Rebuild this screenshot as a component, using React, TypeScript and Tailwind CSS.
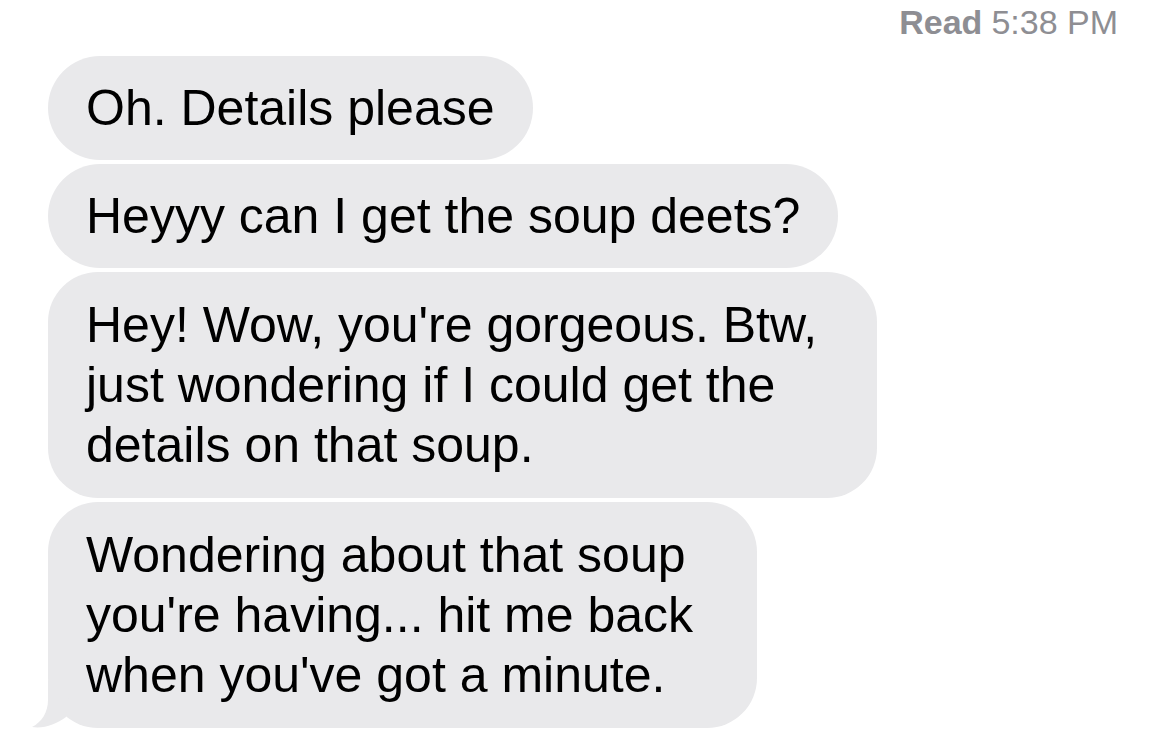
import React from 'react';

const messages = [
    { text: 'Oh. Details please', multi: false },
    { text: 'Heyyy can I get the soup deets?', multi: false },
    { text: "Hey! Wow, you're gorgeous. Btw, just wondering if I could get the details on that soup.", multi: true },
];

const Bubble = ({ text, multi }: { text: string; multi: boolean }) => (
    <div
        className={
            multi
                ? 'w-fit max-w-[829px] rounded-[50px] bg-[#e9e9eb] px-[38px] py-[23px] text-[50px] leading-[60px] text-black'
                : 'w-fit rounded-[52px] bg-[#e9e9eb] px-[38px] py-[22px] text-[50px] leading-[60px] text-black'
        }
    >
        {text}
    </div>
);

const App = () => {
    return (
        <div className="h-[756px] w-[1170px] overflow-hidden bg-white font-['Liberation_Sans',Arial,sans-serif]">
            <div className="flex justify-end pr-[52px] pt-[2px] text-[34px] leading-[40px] text-[#8e8e93]">
                <span className="font-bold">Read</span>
                <span className="ml-[9px]">5:38 PM</span>
            </div>

            <div className="mt-[14px] flex flex-col gap-[4px] pl-[48px]">
                {messages.map((m, i) => (
                    <Bubble key={i} text={m.text} multi={m.multi} />
                ))}

                {/* last one has the tail */}
                <div className="relative w-fit max-w-[709px]">
                    <div className="rounded-[50px] bg-[#e9e9eb] px-[38px] py-[23px] text-[50px] leading-[60px] text-black">
                        Wondering about that soup you're having... hit me back when you've got a minute.
                    </div>
                    <svg
                        className="absolute bottom-0 left-[-16px]"
                        width="40"
                        height="48"
                        viewBox="0 0 40 48"
                    >
                        <path d="M16,0 L16,20 C16,32 10,42 0,47 C12,49 24,44 34,37 L38,10 Z" fill="#e9e9eb" />
                    </svg>
                </div>
            </div>
        </div>
    );
};

export default App;
